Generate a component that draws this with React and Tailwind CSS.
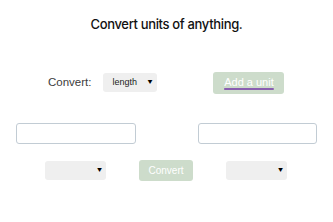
import { useState } from 'react';

const Caret = () => (
  <span className="text-[5px] leading-none text-black">▼</span>
);

const App = () => {
  const [from, setFrom] = useState('');
  const [to, setTo] = useState('');

  return (
    <div className="w-[333px] h-[222px] bg-white font-['Inter',sans-serif]">
      {/* Title */}
      <h1 className="pt-[15px] text-center text-[13px] font-medium tracking-[-0.35px] text-[#111]">
        Convert units of anything.
      </h1>

      {/* Unit type row */}
      <div className="mt-[37px] flex items-center pl-[48px]">
        <span className="text-[11.5px] text-[#3c3c3c] font-['Liberation_Sans',sans-serif]">Convert:</span>
        <div className="ml-[12px] flex h-[19px] w-[54px] items-center justify-between rounded-[3px] bg-[#efefef] pl-[9px] pr-[5px]">
          <span className="text-[9px] text-[#222] font-['Liberation_Sans',sans-serif]">length</span>
          <Caret />
        </div>
        <button className="ml-[56px] h-[22px] w-[71px] rounded-[3px] bg-[#cddccb] text-[11px] text-white font-['Liberation_Sans',sans-serif]">
          <span className="underline decoration-[#8a5fb0] decoration-2 underline-offset-2">Add a unit</span>
        </button>
      </div>

      {/* Value inputs */}
      <div className="mt-[29px] flex justify-between px-[16px]">
        <input
          value={from}
          onChange={(e) => setFrom(e.target.value)}
          className="h-[21px] w-[120px] rounded-[3px] border-[1.5px] border-[#c2ccd4] bg-white outline-none"
        />
        <input
          value={to}
          onChange={(e) => setTo(e.target.value)}
          className="h-[21px] w-[119px] rounded-[3px] border-[1.5px] border-[#c2ccd4] bg-white outline-none"
        />
      </div>

      {/* Unit selectors + convert */}
      <div className="mt-[16px] flex items-center pl-[45px]">
        <div className="flex h-[19px] w-[61px] items-center justify-end rounded-[3px] bg-[#efefef] pr-[4px]">
          <Caret />
        </div>
        <button className="ml-[33px] h-[21px] w-[54px] rounded-[3px] bg-[#cddccb] text-[10px] text-white font-['Liberation_Sans',sans-serif]">
          Convert
        </button>
        <div className="ml-[33px] flex h-[19px] w-[61px] items-center justify-end rounded-[3px] bg-[#efefef] pr-[4px]">
          <Caret />
        </div>
      </div>
    </div>
  );
};

export default App;
